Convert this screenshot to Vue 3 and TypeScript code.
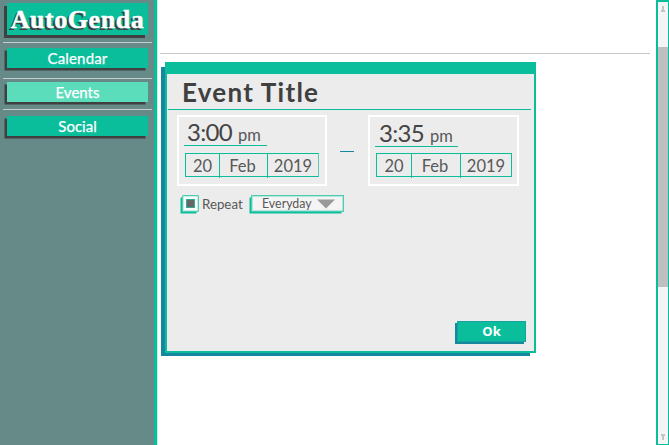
<script setup lang="ts">
import { ref } from 'vue'

interface Slot {
  id: string
  time: string
  half: string
  date: string[]
}

const links = ['Calendar', 'Events', 'Social']
const active = ref('Events')
const repeat = ref(true)
const slots: Slot[] = [
  { id: 'start', time: '3:00', half: 'pm', date: ['20', 'Feb', '2019'] },
  { id: 'end', time: '3:35', half: 'pm', date: ['20', 'Feb', '2019'] },
]
</script>

<template>
  <div class="app">
    <aside class="sidebar">
      <div class="logo"><span>AutoGenda</span></div>
      <nav>
        <div v-for="link in links" :key="link" class="entry" :class="link.toLowerCase()">
          <button :class="{ active: link === active }" @click="active = link"><span>{{ link }}</span></button>
        </div>
      </nav>
    </aside>
    <main>
      <hr class="rule" />
      <section class="dialog">
        <h1><span>Event Title</span></h1>
        <div class="slots">
          <template v-for="(slot, i) in slots" :key="slot.id">
            <i v-if="i > 0" class="dash"></i>
            <div class="slot" :class="slot.id">
              <div class="time"><span class="clock">{{ slot.time }}</span><span class="half">{{ slot.half }}</span></div>
              <div class="date"><span v-for="part in slot.date" :key="part">{{ part }}</span></div>
            </div>
          </template>
        </div>
        <div class="repeat">
          <button class="check" aria-label="Repeat" @click="repeat = !repeat"><i v-if="repeat"></i></button>
          <span class="label">Repeat</span>
          <button class="select">
            <span>Everyday</span>
            <svg width="18" height="10" viewBox="0 0 18 10"><path d="M0 .5h18L9 9.5z" fill="#999" /></svg>
          </button>
        </div>
        <button class="ok"><span>Ok</span></button>
      </section>
    </main>
    <div class="scrollbar">
      <svg class="up" width="6" height="7" viewBox="0 0 6 7"><path d="M2 0h2v4h1v2H1V4h1z" fill="#c4c4c4" /></svg>
      <div class="thumb"></div>
      <svg class="down" width="6" height="7" viewBox="0 0 6 7"><path d="M1 1h4v2H4v4H2V3H1z" fill="#c4c4c4" /></svg>
    </div>
  </div>
</template>

<style>
body { margin: 0; background: #fff; overflow: hidden; }
</style>

<style scoped>
* { box-sizing: border-box; }
.app {
  display: flex;
  width: 669px;
  height: 445px;
  font-family: Lato, "Noto Sans", sans-serif;
  color: #585858;
}
button { border: 0; padding: 0; margin: 0; font: inherit; color: inherit; white-space: nowrap; }
.sidebar {
  width: 158px;
  flex: none;
  background: #668a88;
  border-right: 1px solid #c5f0e6;
  box-shadow: inset -3px 0 #0abe9c;
  padding-top: 3px;
}
.logo {
  margin-left: 7px;
  width: 141px;
  height: 32px;
  background: #0abe9c;
  box-shadow: -3px 3px #404040;
  color: #fff;
  font: bold 26px/33px "Liberation Serif", serif;
  text-align: center;
  text-shadow: -2px 2px #404040;
  letter-spacing: .55px;
}
.logo span { -webkit-text-stroke: .4px #fff; }
.entry { border-top: 1px solid #c8cccc; margin-left: 3px; width: 149px; }
.calendar { margin-top: 7px; padding: 5px 0 10px 4px; }
.events { padding: 3px 0 7px 4px; }
.social { padding: 6px 0 0 4px; }
.entry button {
  display: block;
  width: 141px;
  height: 20px;
  background: #0abe9c;
  box-shadow: -2.5px 2.5px #404040;
  color: #fff;
  font-size: 15px;
  line-height: 20px;
}
.calendar button { letter-spacing: .15px; }
.entry button.active { background: #5bdcbb; }
.entry button span { -webkit-text-stroke: .25px #fff; }
main { width: 498px; flex: none; padding: 53px 6px 0 2px; }
.rule { margin: 0; border: 0; height: 1px; background: #c8c8c8; }
.dialog {
  display: flex;
  flex-direction: column;
  margin: 8px 0 0 5px;
  width: 371px;
  height: 291px;
  background: #ececec;
  border: 2px solid #0abe9c;
  border-top-width: 12px;
  box-shadow: -5px 4px 0 -1px #1588a0;
}
h1 {
  margin: 0 3px 0 1px;
  height: 36px;
  padding-left: 14px;
  border-bottom: 1px solid #0abe9c;
  color: #404040;
  font-size: 26px;
  line-height: 37px;
  letter-spacing: 1.25px;
  white-space: nowrap;
}
.slots { display: flex; height: 71px; margin: 5px 0 0 10px; }
.slot { width: 150px; border: 2px solid #fff; padding-left: 5px; }
.slot.end { width: 151px; }
.dash { width: 14px; height: 1px; background: #1588a0; margin: 36px 14px 0 13px; }
.time {
  display: flex;
  align-items: baseline;
  height: 29px;
  width: 83px;
  border-bottom: 1px solid #0abe9c;
  padding-left: 3px;
  line-height: 29px;
}
.end .time { height: 30px; line-height: 31px; }
.clock { font-size: 24px; width: 51px; color: #444; letter-spacing: -.7px; }
.half { font-size: 16.5px; }
.date {
  display: grid;
  grid-template-columns: 33px 48px 51px;
  width: 134px;
  height: 24px;
  margin: 7px 0 0 1px;
  border: 1px solid #0abe9c;
  border-right-color: #5bcbb0;
  font-size: 16.5px;
  line-height: 24px;
  text-align: center;
}
.end .time { padding-left: 4px; }
.end .date { grid-template-columns: 34px 49px 51px; width: 136px; margin-top: 6px; border-right-color: #0abe9c; }
.date span + span { border-left: 1px solid #0abe9c; }
.date span:nth-child(2) { padding-right: 2px; }
.repeat { display: flex; height: 17px; margin: 9px 0 0 15px; }
.check {
  display: grid;
  place-items: center;
  width: 17px;
  height: 17px;
  background: #fff;
  border: 1.5px solid #4ccdb2;
  border-radius: 1px;
  box-shadow: -2px 2px 0 -.5px #0abe9c, inset 0 0 0 1px #c6eee5;
}
.check i { width: 9px; height: 9px; background: #666; border: 1px solid #2baf98; }
.label { width: 49px; padding-left: 3px; font-size: 13.3px; line-height: 18px; white-space: nowrap; }
.select {
  display: flex;
  align-items: center;
  margin-left: 3px;
  width: 93px;
  height: 17px;
  background: #f4f4f4;
  border: 1px solid #4ccdb2;
  box-shadow: -2px 2px 0 -.5px #0abe9c, inset 0 0 0 1px #b5e6dc;
  padding-left: 10px;
  font-size: 12.4px;
  line-height: 14px;
}
.select span { width: 55px; text-align: left; }
.ok {
  align-self: flex-end;
  margin: auto 8px 9px 0;
  width: 69px;
  height: 21px;
  background: #0abe9c;
  border: 1px solid #16a3a0;
  box-shadow: -2px 2px #1588a0;
  color: #fff;
  font: bold 13px/19px "Open Sans", sans-serif;
}
.scrollbar {
  display: flex;
  flex-direction: column;
  align-items: center;
  width: 13px;
  background: #f4f4f4;
  border: 2px solid #0abe9c;
  border-right-width: 1px;
  border-bottom-width: 1px;
}
.up { margin: 4px 0 34px; }
.thumb { width: 10px; height: 240px; background: #bfbfbf; }
.down { margin: auto 0 4px; }
</style>
